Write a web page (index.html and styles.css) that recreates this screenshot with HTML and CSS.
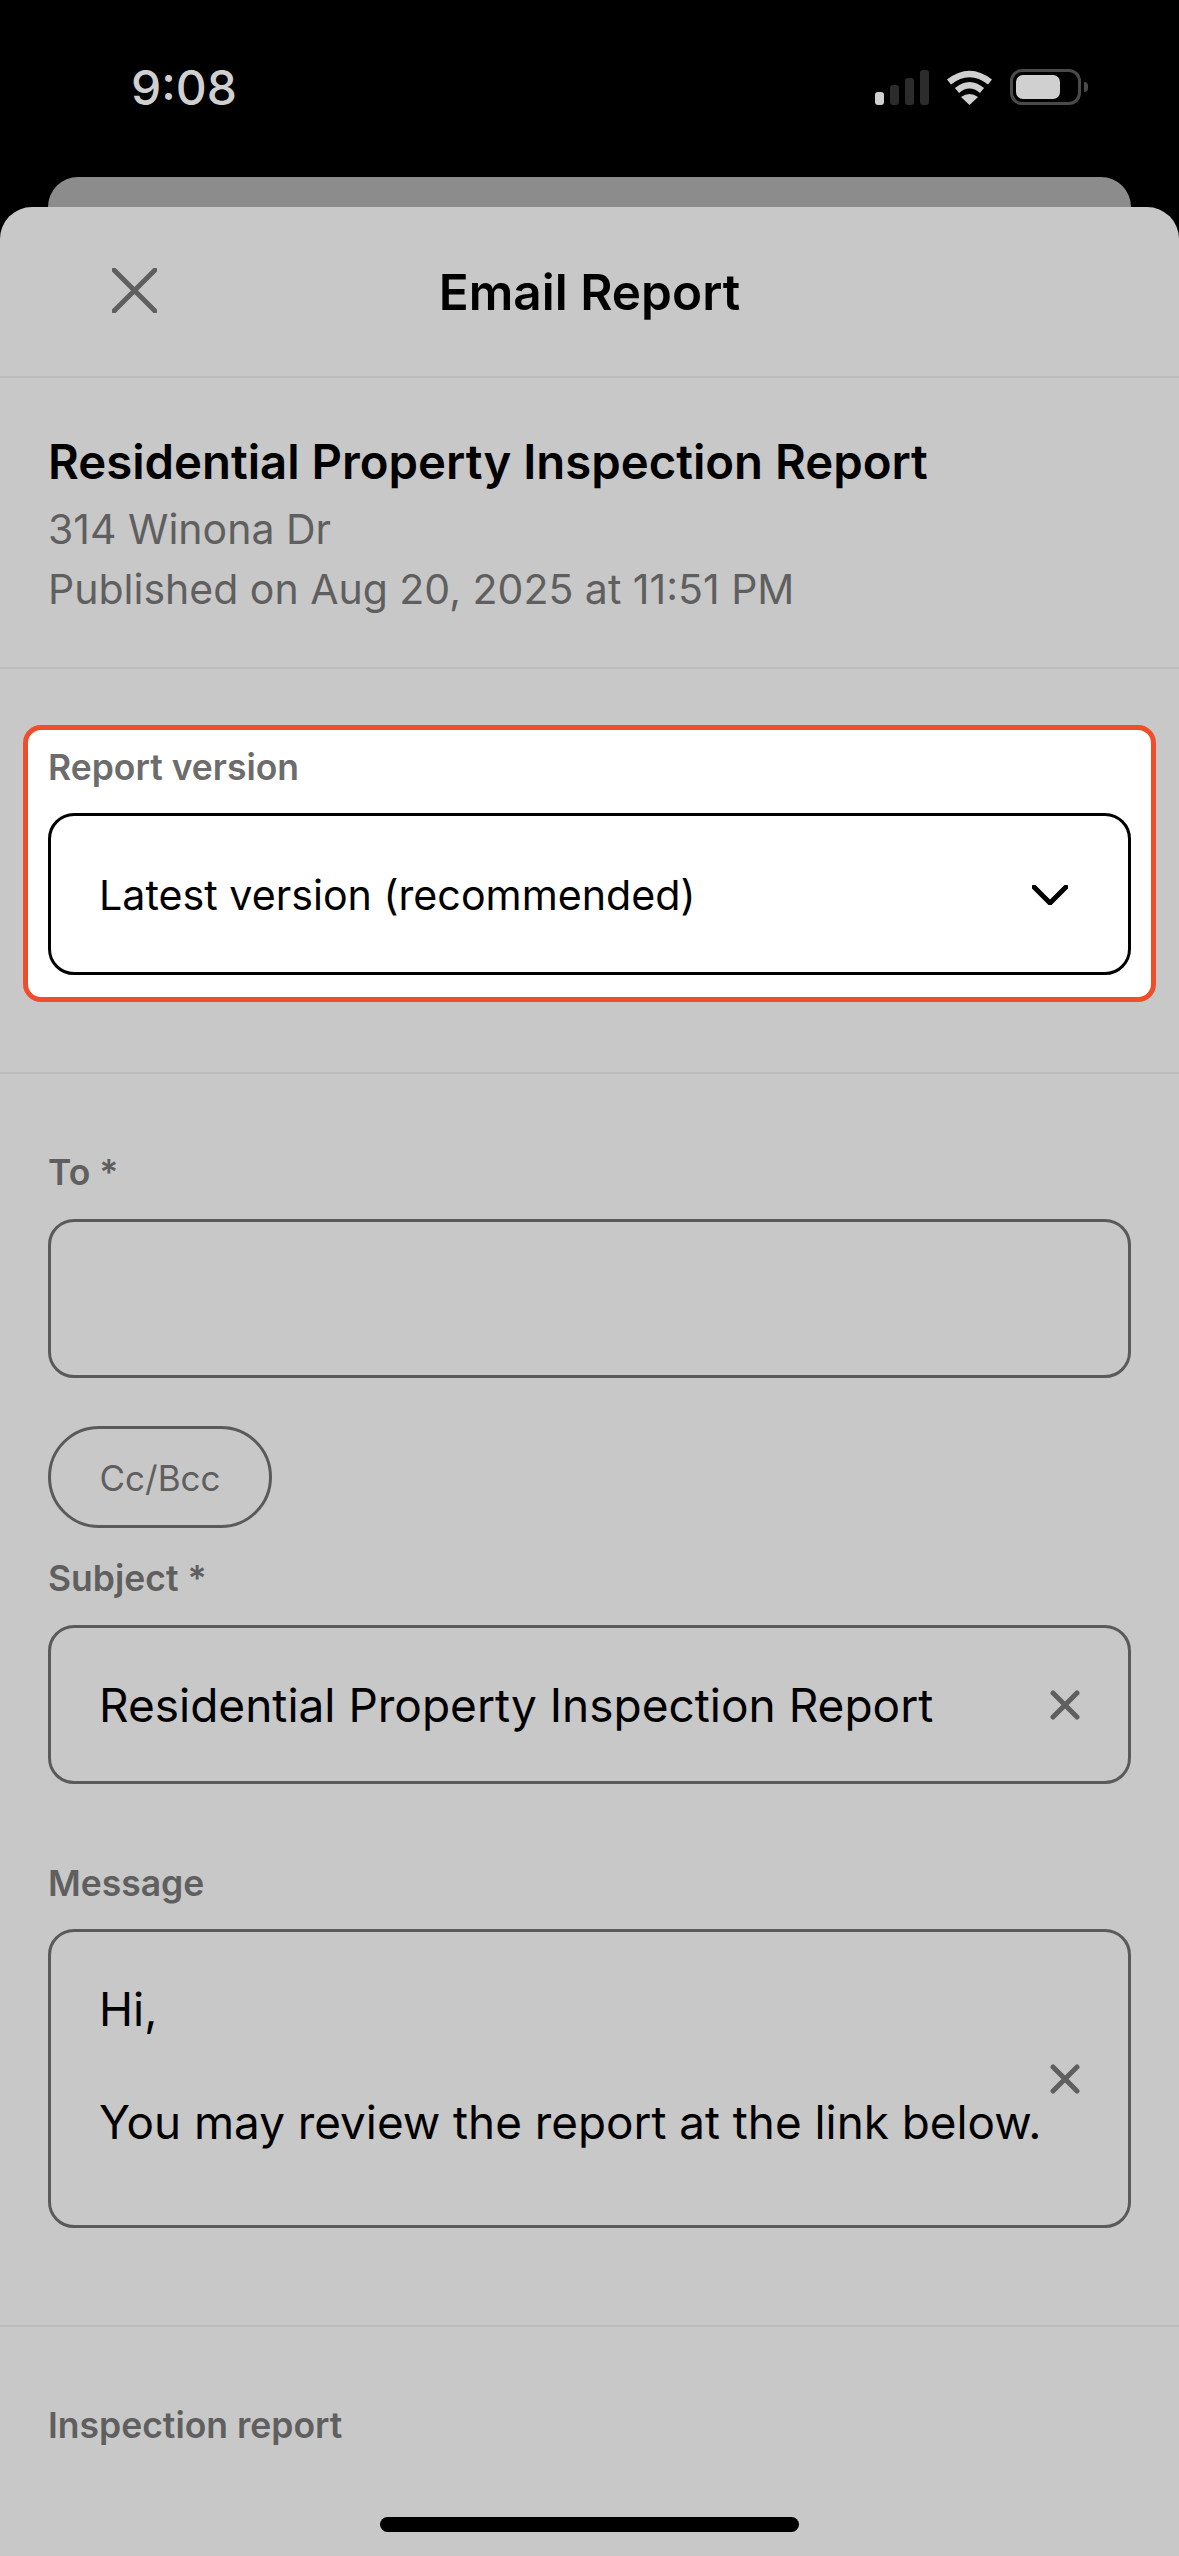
FILE: index.html
```html
<!DOCTYPE html>
<html lang="en">
<head>
    <meta charset="UTF-8">
    <meta name="viewport" content="width=device-width, initial-scale=1.0">
    <title>Email Report</title>
    <link rel="stylesheet" href="styles.css">
</head>
<body>
    <div class="status-bar">
        <span class="time">9:08</span>
        <div class="status-icons">
            <div class="signal">
                <span class="bar bar-1"></span>
                <span class="bar bar-2"></span>
                <span class="bar bar-3"></span>
                <span class="bar bar-4"></span>
            </div>
            <svg class="wifi" width="47" height="35" viewBox="0 0 47 35">
                <path d="M3 12 Q23.5 -4 44 12" fill="none" stroke="#d0d0d0" stroke-width="6.5"/>
                <path d="M11 20.5 Q23.5 10 36 20.5" fill="none" stroke="#d0d0d0" stroke-width="6.5"/>
                <path d="M23.5 35 L15 27 Q23.5 21 32 27 Z" fill="#d0d0d0"/>
            </svg>
            <div class="battery"><span class="battery-fill"></span></div>
            <span class="battery-nub"></span>
        </div>
    </div>
    <div class="back-sheet"></div>
    <div class="sheet">
        <div class="sheet-header">
            <svg class="close-icon" width="45" height="45" viewBox="0 0 45 45">
                <path d="M2 2 L43 43 M43 2 L2 43" stroke="#5f5f5f" stroke-width="5" stroke-linecap="round"/>
            </svg>
            <h1>Email Report</h1>
        </div>
        <div class="report-info">
            <h2>Residential Property Inspection Report</h2>
            <p>314 Winona Dr</p>
            <p>Published on Aug 20, 2025 at 11:51 PM</p>
        </div>
        <div class="version-section">
            <div class="highlight">
                <div class="field-label">Report version</div>
                <div class="select-box">
                    <span>Latest version (recommended)</span>
                    <svg width="36" height="20" viewBox="0 0 36 20">
                        <path d="M2 2 L18 18 L34 2" fill="none" stroke="#000" stroke-width="5" stroke-linecap="round" stroke-linejoin="round"/>
                    </svg>
                </div>
            </div>
        </div>
        <div class="email-form">
            <div class="field-label">To *</div>
            <div class="input-box to-box"></div>
            <div class="cc-button">Cc/Bcc</div>
            <div class="field-label subject-label">Subject *</div>
            <div class="input-box subject-box">
                <span>Residential Property Inspection Report</span>
                <svg class="clear-icon" width="30" height="30" viewBox="0 0 30 30">
                    <path d="M3 3 L27 27 M27 3 L3 27" stroke="#5f5f5f" stroke-width="5" stroke-linecap="round"/>
                </svg>
            </div>
            <div class="field-label message-label">Message</div>
            <div class="input-box message-box">
                <div class="message-text">Hi,<br><br>You may review the report at the link below.</div>
                <svg class="clear-icon" width="30" height="30" viewBox="0 0 30 30">
                    <path d="M3 3 L27 27 M27 3 L3 27" stroke="#5f5f5f" stroke-width="5" stroke-linecap="round"/>
                </svg>
            </div>
        </div>
        <div class="attachment-section">
            <div class="field-label">Inspection report</div>
        </div>
    </div>
    <div class="home-bar"></div>
</body>
</html>
```

FILE: styles.css
```css
html, body {
    margin: 0;
    padding: 0;
}

body {
    width: 1179px;
    height: 2556px;
    overflow: hidden;
    position: relative;
    background-color: #000;
    font-family: Inter, "Noto Sans", sans-serif;
    color: #000;
}

.status-bar {
    height: 177px;
    box-sizing: border-box;
    padding: 60px 91px 0 131px;
    display: flex;
    justify-content: space-between;
    align-items: flex-start;
}

.time {
    font-size: 48px;
    line-height: 56px;
    font-weight: 500;
    color: #d0d0d0;
}

.status-icons {
    display: flex;
    align-items: center;
    margin-top: 9px;
    height: 36px;
}

.signal {
    display: flex;
    align-items: flex-end;
    gap: 6px;
    height: 35px;
    margin-right: 17px;
}

.bar {
    width: 9px;
    border-radius: 3px;
    background-color: #2c2c2c;
}

.bar-1 {
    height: 13px;
    background-color: #d0d0d0;
}

.bar-2 {
    height: 20px;
}

.bar-3 {
    height: 27px;
}

.bar-4 {
    height: 35px;
}

.wifi {
    margin-right: 17px;
}

.battery {
    width: 71px;
    height: 36px;
    box-sizing: border-box;
    border: 3px solid #4a4a4a;
    border-radius: 12px;
    padding: 3px;
}

.battery-fill {
    display: block;
    width: 44px;
    height: 24px;
    border-radius: 7px;
    background-color: #d0d0d0;
}

.battery-nub {
    width: 4px;
    height: 10px;
    margin-left: 3px;
    border-radius: 0 5px 5px 0;
    background-color: #4a4a4a;
}

.back-sheet {
    height: 30px;
    margin: 0 48px;
    border-radius: 30px 30px 0 0;
    background-color: #8c8c8d;
}

.sheet {
    height: 2349px;
    border-radius: 32px 32px 0 0;
    background-color: #c8c8c8;
}

.sheet-header {
    height: 169px;
    border-bottom: 2px solid #bdbdbd;
    display: flex;
    align-items: center;
    justify-content: center;
    position: relative;
}

.close-icon {
    position: absolute;
    left: 112px;
    top: 61px;
}

h1 {
    margin: 0;
    font-size: 49.5px;
    font-weight: 600;
}

.report-info {
    height: 291px;
    box-sizing: border-box;
    padding: 54px 48px 0;
    border-bottom: 2px solid #bdbdbd;
}

h2 {
    margin: 0 0 7px;
    font-size: 47.3px;
    line-height: 60px;
    font-weight: 600;
}

.report-info p {
    margin: 0;
    font-size: 41px;
    line-height: 60px;
    color: #5f5f5f;
}

.version-section {
    padding: 56px 23px 70px;
    border-bottom: 2px solid #bdbdbd;
}

.highlight {
    height: 277px;
    box-sizing: border-box;
    padding: 14px 20px 0;
    border: 5px solid #ef4e2b;
    border-radius: 18px;
    background-color: #fff;
}

.field-label {
    padding-top: 2px;
    font-size: 35.5px;
    line-height: 44px;
    font-weight: 600;
    color: #5f5f5f;
    margin-bottom: 24px;
}

.highlight .field-label {
    color: #6c6c6c;
    margin-bottom: 23px;
}

.select-box {
    height: 162px;
    box-sizing: border-box;
    padding: 2px 60px 0 48px;
    border: 3px solid #000;
    border-radius: 26px;
    display: flex;
    align-items: center;
    justify-content: space-between;
    font-size: 41.2px;
}

.email-form {
    height: 1253px;
    box-sizing: border-box;
    padding: 75px 48px 0;
    border-bottom: 2px solid #bdbdbd;
}

.input-box {
    box-sizing: border-box;
    border: 3px solid #5a5a5a;
    border-radius: 26px;
    display: flex;
    align-items: center;
    justify-content: space-between;
    padding: 0 48px 0 48px;
    font-size: 46px;
}

.to-box {
    height: 159px;
}

.cc-button {
    width: 224px;
    height: 102px;
    box-sizing: border-box;
    margin-top: 48px;
    border: 3px solid #5a5a5a;
    border-radius: 51px;
    display: flex;
    align-items: center;
    justify-content: center;
    padding-top: 2px;
    font-size: 35px;
    color: #5f5f5f;
}

.subject-label {
    margin-top: 27px;
}

.subject-box {
    height: 159px;
}

.message-label {
    margin-top: 76px;
    margin-bottom: 23px;
}

.message-box {
    height: 299px;
    font-size: 45.8px;
}

.message-text {
    line-height: 56.5px;
    white-space: nowrap;
    margin-bottom: 24px;
}

.clear-icon {
    flex-shrink: 0;
}

.attachment-section {
    padding: 75px 48px 0;
}

.home-bar {
    position: absolute;
    left: 380px;
    top: 2517px;
    width: 419px;
    height: 15px;
    border-radius: 8px;
    background-color: #000;
}
```
